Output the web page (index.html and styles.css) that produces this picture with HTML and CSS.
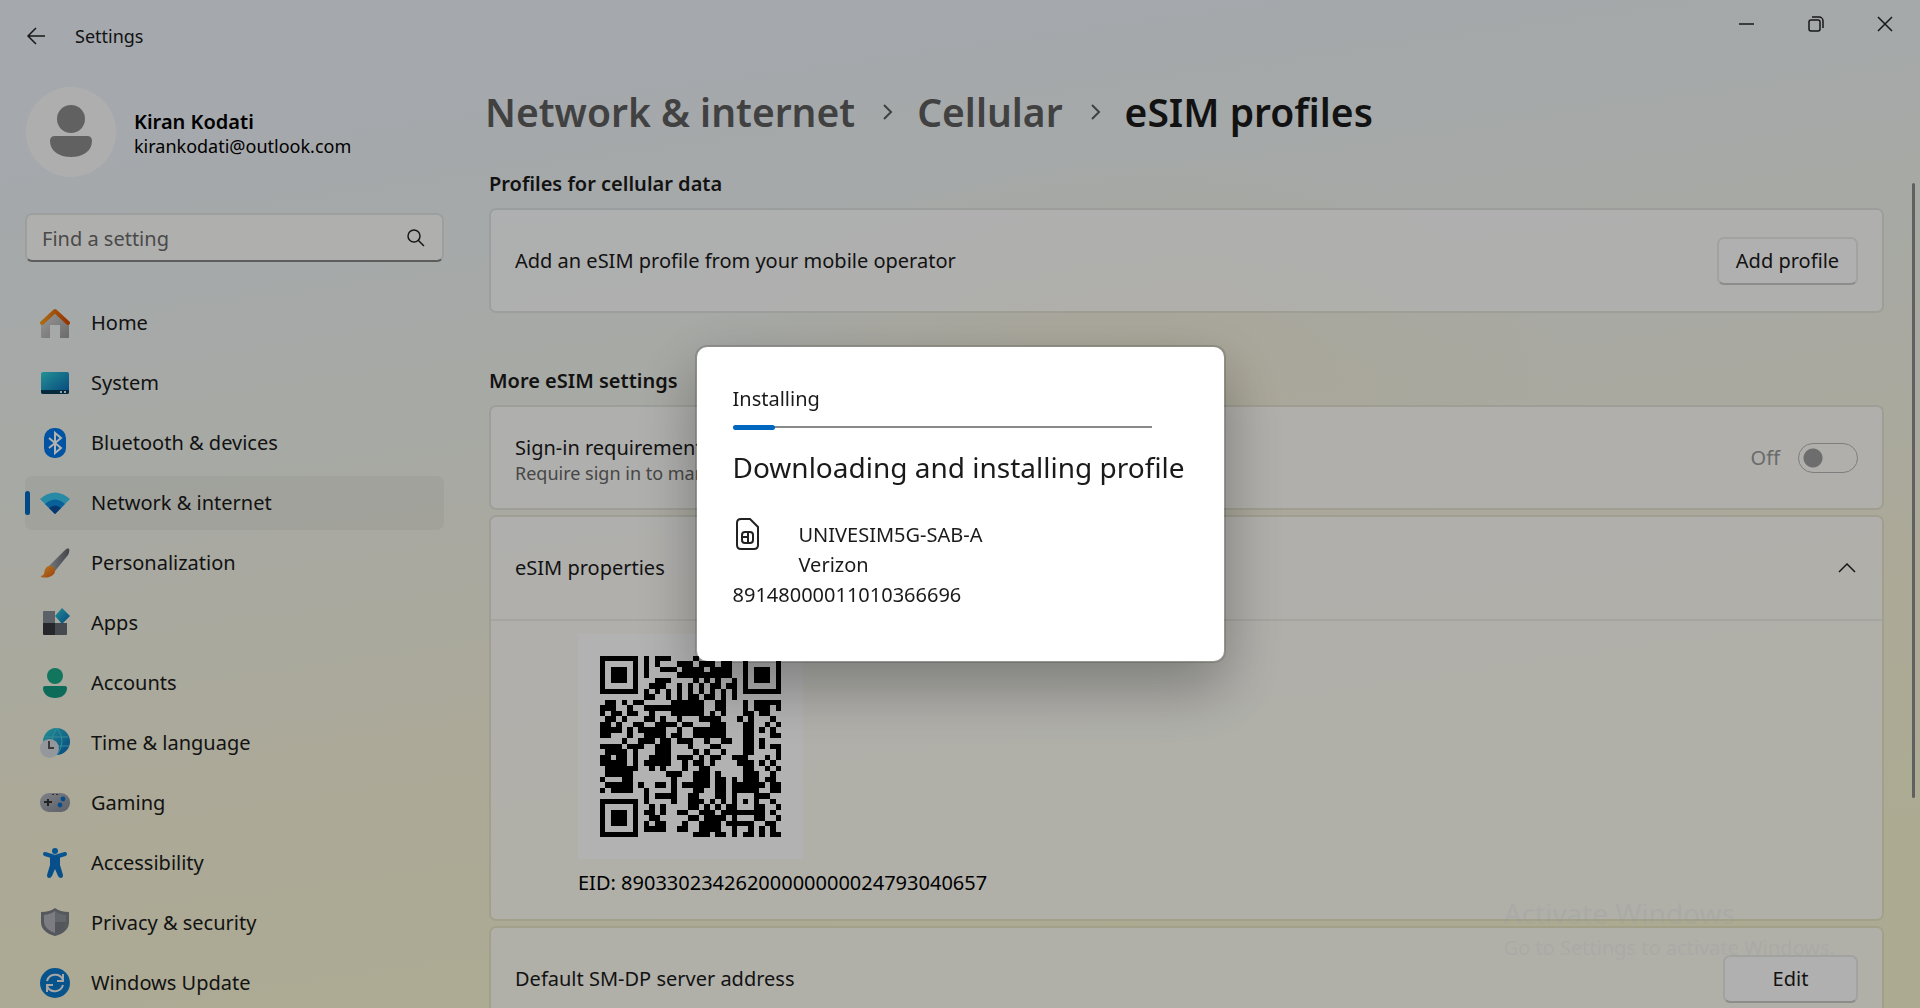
FILE: index.html
```html
<!doctype html>
<html lang="en">
<head>
  <meta charset="utf-8">
  <title>Settings</title>
  <link rel="stylesheet" href="styles.css">
</head>
<body>
<div class="window">
  <header class="titlebar">
    <button class="back" aria-label="Back"><svg width="20" height="18" viewBox="0 0 20 18"><path d="M19 9H2M10 1L2 9l8 8"/></svg></button>
    <span class="app-name">Settings</span>
    <div class="controls">
      <button aria-label="Minimize"><svg width="16" height="16" viewBox="0 0 16 16"><path d="M0 8h15"/></svg></button>
      <button aria-label="Restore"><svg width="16" height="16" viewBox="0 0 16 16"><rect x="1" y="4" width="11" height="11" rx="2"/><path d="M4 1h7a4 4 0 0 1 4 4v7"/></svg></button>
      <button aria-label="Close"><svg width="16" height="16" viewBox="0 0 16 16"><path d="M1 1l14 14M15 1L1 15"/></svg></button>
    </div>
  </header>

  <div class="body">
    <aside class="sidebar">
      <div class="user">
        <svg class="avatar" width="90" height="90" viewBox="0 0 90 90"><circle cx="45" cy="45" r="45" fill="#fafafa"/><circle cx="45" cy="32" r="14" fill="#8c8c8c"/><path d="M29 49h32q5 0 5 5c0 10-9 16-21 16s-21-6-21-16q0-5 5-5z" fill="#8c8c8c"/></svg>
        <div>
          <div class="user-name">Kiran Kodati</div>
          <div class="user-mail">kirankodati@outlook.com</div>
        </div>
      </div>
      <div class="search">
        <input type="text" placeholder="Find a setting" aria-label="Find a setting">
        <svg width="18" height="18" viewBox="0 0 18 18"><circle cx="7" cy="7" r="6"/><path d="M11 11l6 6"/></svg>
      </div>
      <nav class="menu">
        <a href="#"><svg viewBox="0 0 30 30"><defs><linearGradient id="wall" x1="0" y1="0" x2="1" y2="1"><stop offset="0" stop-color="#ddd"/><stop offset="1" stop-color="#999"/></linearGradient><linearGradient id="roof"><stop offset="0" stop-color="#f59a1c"/><stop offset="1" stop-color="#d84800"/></linearGradient></defs><path d="M1 14L15 2l14 12v15q0 1-1 1h-8V17H10v13H2q-1 0-1-1z" fill="url(#wall)"/><path d="M2 15L15 3l13 12" fill="none" stroke="url(#roof)" stroke-width="4" stroke-linecap="round" stroke-linejoin="round"/></svg>Home</a>
        <a href="#"><svg viewBox="0 0 30 30"><defs><linearGradient id="screen" x1="0" y1="0" x2="1" y2="1"><stop offset="0" stop-color="#34d0d5"/><stop offset="1" stop-color="#0864b5"/></linearGradient></defs><rect x="1" y="4" width="28" height="22" rx="2" fill="url(#screen)"/><path d="M1 22h28v2q0 2-2 2H3q-2 0-2-2z" fill="#083d58"/><path d="M20 23h2v2h-2zM24 23h2v2h-2z" fill="#d8e8f0"/></svg>System</a>
        <a href="#"><svg viewBox="0 0 30 30"><rect x="4" y="0" width="22" height="30" rx="10" fill="#0078e8"/><path d="M9 10l12 10-6 5V5l6 5L9 20" fill="none" stroke="#fff" stroke-width="2"/></svg>Bluetooth &amp; devices</a>
        <a href="#" class="active"><svg viewBox="0 0 30 30"><path d="M0 11q15-13 30 0L15 26z" fill="#3cc6ee"/><path d="M5 16q10-9 20 0L15 26z" fill="#0f8bdc"/><path d="M9 20q6-5 12 0l-6 6z" fill="#0b4f9d"/></svg>Network &amp; internet</a>
        <a href="#"><svg viewBox="0 0 30 30"><defs><linearGradient id="handle"><stop offset="0" stop-color="#a5aab2"/><stop offset="1" stop-color="#5f636a"/></linearGradient><linearGradient id="tip" x1="0" y1="0" x2="1" y2="1"><stop offset="0" stop-color="#ffb52e"/><stop offset="1" stop-color="#e65a18"/></linearGradient></defs><path d="M9 18L24 3q4-4 5-2t-1 6L15 23z" fill="url(#handle)"/><path d="M1 28c5-1 2-5 5-8 3-4 9-2 9 3 0 4-6 8-14 6z" fill="url(#tip)"/></svg>Personalization</a>
        <a href="#"><svg viewBox="0 0 30 30"><path d="M4 3h11v12H3V4q0-1 1-1z" fill="#858a94"/><path d="M3 15h12v12H4q-1 0-1-1z" fill="#35393e"/><path d="M15 15h12v11q0 1-1 1H15z" fill="#646973"/><path d="M22 0l8 8-8 8-7-8z" fill="url(#screen)"/></svg>Apps</a>
        <a href="#"><svg viewBox="0 0 30 30"><circle cx="15" cy="8" r="8" fill="#1aa987"/><path d="M5 18h20q2 0 2 2c0 6-5 10-12 10S3 26 3 20q0-2 2-2z" fill="#149a80"/></svg>Accounts</a>
        <a href="#"><svg viewBox="0 0 30 30"><circle cx="16.500" cy="13.500" r="13.500" fill="url(#screen)"/><path d="M5 9h23M5 18h24M17 0q-10 13 0 27M17 0q10 13 0 27" fill="none" stroke="#4ec9d8"/><circle cx="9.500" cy="20.500" r="9.500" fill="#d5d9df"/><path d="M9 13v7h5" fill="none" stroke="#555" stroke-width="2"/></svg>Time &amp; language</a>
        <a href="#"><svg viewBox="0 0 30 30"><defs><linearGradient id="pad" x1="0" y1="0" x2="1" y2="1"><stop offset="0" stop-color="#b5b9c2"/><stop offset="1" stop-color="#858993"/></linearGradient></defs><rect x="0" y="5" width="30" height="19" rx="9" fill="url(#pad)"/><path d="M8 11v7M4 14h8" stroke="#333" stroke-width="2"/><circle cx="23" cy="11" r="2.400" fill="#0870c8"/><circle cx="20" cy="17" r="2.400" fill="#0870c8"/><path d="M12 6h2v1h-2zM16 6h2v1h-2z" fill="#444"/></svg>Gaming</a>
        <a href="#"><svg viewBox="0 0 30 30"><circle cx="15" cy="3" r="3" fill="#0a7ad0"/><path d="M5 6l10 3 10-3" fill="none" stroke="#0a7ad0" stroke-width="4" stroke-linecap="round" stroke-linejoin="round"/><path d="M10 8h10v9l3 10q0 3-2 3t-3-2l-3-7-3 7q-1 2-3 2t-2-3l3-10z" fill="#0a72c8"/></svg>Accessibility</a>
        <a href="#"><svg viewBox="0 0 30 30"><path d="M15 0q5 4 14 4v10q0 10-14 14Q1 24 1 14V4q9 0 14-4z" fill="#7a7e85"/><path d="M15 3q4 3 11 4v7q0 7-11 11z" fill="#8f949b"/><path d="M15 3Q11 6 4 7v7q0 7 11 11z" fill="#b0b4ba"/><path d="M15 14h11q0 7-11 11z" fill="#777b82"/></svg>Privacy &amp; security</a>
        <a href="#"><svg viewBox="0 0 30 30"><circle cx="15" cy="15" r="15" fill="#0b78c9"/><path d="M7 13a8.500 8.500 0 0 1 16-1M23 6v7h-6M23 17a8.500 8.500 0 0 1-16 1M7 24v-7h6" fill="none" stroke="#eee" stroke-width="2"/></svg>Windows Update</a>
      </nav>
    </aside>

    <main class="content">
      <h1 class="crumbs">
        <a href="#">Network &amp; internet</a>
        <svg width="10" height="16" viewBox="0 0 10 16"><path d="M1 1l7 7-7 7"/></svg>
        <a href="#">Cellular</a>
        <svg width="10" height="16" viewBox="0 0 10 16"><path d="M1 1l7 7-7 7"/></svg>
        <span>eSIM profiles</span>
      </h1>

      <h2>Profiles for cellular data</h2>
      <section class="card row">
        <span>Add an eSIM profile from your mobile operator</span>
        <button class="btn">Add profile</button>
      </section>

      <h2 class="more">More eSIM settings</h2>
      <section class="card row">
        <div>
          <label for="signin">Sign-in requirement</label>
          <div class="note">Require sign in to manage</div>
        </div>
        <div class="switch">
          <span>Off</span>
          <input type="checkbox" id="signin" disabled>
        </div>
      </section>
      <section class="card">
        <div class="row">
          <span>eSIM properties</span>
          <button class="chevron" aria-label="Collapse"><svg width="18" height="10" viewBox="0 0 18 10"><path d="M1 9l8-8 8 8"/></svg></button>
        </div>
        <div class="props">
          <svg id="qr" class="qr" viewBox="-4 -4 41 41" shape-rendering="crispEdges"></svg>
          <div>EID: 89033023426200000000024793040657</div>
        </div>
      </section>
      <section class="card row">
        <span>Default SM-DP server address</span>
        <button class="btn edit">Edit</button>
      </section>
    </main>
  </div>
  <div class="scrollbar"></div>
</div>

<div class="overlay">
  <div class="dialog" role="dialog" aria-labelledby="dialog-title">
    <div>Installing</div>
    <div class="progress"><div class="bar"></div></div>
    <h3 id="dialog-title">Downloading and installing profile</h3>
    <div class="profile">
      <svg width="24" height="32" viewBox="0 0 24 32"><path d="M5 1h9l8 8v18q0 4-4 4H5q-4 0-4-4V5q0-4 4-4z"/><rect x="6" y="14" width="11" height="11" rx="3"/><path d="M6 19h6M12 14v11"/></svg>
      <div>UNIVESIM5G-SAB-A<br>Verizon</div>
    </div>
    <div>89148000011010366696</div>
  </div>
</div>

<div class="watermark">
  <div class="big">Activate Windows</div>
  <div>Go to Settings to activate Windows.</div>
</div>

<script>
  var rows=[
    '#######.#.###....#........#######',
    '#.....#.#.#...###.###.##..#.....#',
    '#.###.#.#..###.####.####..#.###.#',
    '#.###.#.#.....##########..#.###.#',
    '#.###.#...###....#.#.#..#.#.###.#',
    '#.....#..###..#.#.#.##.##.#.....#',
    '#######.#.#.#.#.#.#.#.#.#.#######',
    '........##..#.#.##.##.#.#........',
    '.##.#.##.....######..##...#.#####',
    '###..#..###########..##...#.###.#',
    '#.##.##..#...######.#.#...##.##..',
    '.##.#...##.#..#...####...#.#...#.',
    '##.#..##..####.##...###...##..#.#',
    '####.#.#####..#..######...##.#.#.',
    '##...#..####.##..######...##...##',
    '....#..###.##.###..#..##..##.#...',
    '####.###..###...#...##....##.#.##',
    '.####.#...###....#.#..#...##....#',
    '##.##.#..####.###.#.##..###...#.#',
    '#####.#.#####..#.##.#....###.#.#.',
    '.######..#.#...#..##......##..#.#',
    '.#####......###..###.#....###..#.',
    '#...##.......#...###.##.#.###.##.',
    '.#####.#..##.#.#####.##.######.##',
    '#.####..#....#...##..##.#####..##',
    '........#.####..##...##.#...###..',
    '#######.#....#..###.#.#.#.#.#..#.',
    '#.....#..#.#....##.#.#.##...##..#',
    '#.###.#.##.#..##..###.########.#.',
    '#.###.#..##.....##.####.#...##..#',
    '#.###.#.#.##...#..####.#####..##.',
    '#.....#.####..##..####..#..#.#.#.',
    '#######..........###.##.#.##.#.##'
  ];
  var d='';
  rows.forEach(function(row,y){
    for(var x=0;x<row.length;x++){
      if(row[x]==='#'){d+='M'+x+' '+y+'h1v1h-1z';}
    }
  });
  document.getElementById('qr').innerHTML='<path d="'+d+'"/>';
</script>
</body>
</html>
```
FILE: styles.css
```css
*{box-sizing:border-box;}
body{margin:0;height:100vh;overflow:hidden;font-family:"Noto Sans",sans-serif;font-size:20px;line-height:30px;color:#1a1a1a;}
button,input{font:inherit;color:inherit;}
button{border:0;padding:0;background:none;}
a{color:inherit;text-decoration:none;}
svg{display:block;flex:none;}

.window{height:100vh;overflow:hidden;display:flex;flex-direction:column;background:radial-gradient(ellipse at 60% 38%,rgba(246,238,212,.7),rgba(246,238,212,0) 26%),linear-gradient(172deg,#ecf1f8 8%,#edf2f2 24%,#f2f2e6 48%,#f6f2da 64%,#f7f5d2 85%);}
.titlebar{height:72px;flex:none;display:flex;align-items:center;padding-left:26px;}
.back svg,.controls svg,.search svg,.crumbs svg,.chevron svg,.profile svg{fill:none;stroke:#222;stroke-width:1.5;}
.app-name{margin-left:29px;font-size:18px;}
.controls{display:flex;margin-left:auto;padding-right:1px;align-self:flex-start;}
.controls button{width:69px;height:47px;display:flex;align-items:center;justify-content:center;}

.body{flex:1;min-height:0;display:flex;}
.sidebar{width:444px;flex:none;padding:15px 0 0 25px;}
.user{display:flex;align-items:center;gap:18px;padding-left:1px;line-height:25px;}
.user-name{padding-top:4px;font-weight:600;color:#000;}
.user-mail{font-size:18px;color:#000;}
.search{position:relative;margin-top:36px;}
.search input{display:block;width:100%;height:49px;padding:2px 15px 0;border:2px solid #dfe5e4;border-bottom-color:#868686;border-radius:7px;background:#fbfbfa;}
.search input::placeholder{color:#6a6a6a;opacity:1;}
.search svg{position:absolute;right:19px;top:16px;}
.menu{margin-top:34px;}
.menu a{position:relative;display:flex;align-items:center;gap:21px;height:54px;margin-bottom:6px;padding:0 15px;border-radius:7px;}
.menu svg{width:30px;height:30px;}
.active{background:rgba(0,0,0,.04);}
.active::before{content:"";position:absolute;left:0;top:15px;width:5px;height:24px;border-radius:3px;background:#0067c0;}

.content{flex:1;min-width:0;padding:10px 36px 0 45px;}
h1,h2,h3{margin:0;}
.crumbs{display:flex;align-items:center;margin-left:-4px;font-size:39px;line-height:60px;font-weight:600;white-space:nowrap;}
.crumbs a{color:#5d5d5d;}
.crumbs svg{margin:0 24px 0 28px;stroke:#5d5d5d;stroke-width:2;}
h2{margin-top:27px;font-size:20px;line-height:30px;font-weight:600;}
h2.more{margin-top:53px;}
h2+.card{margin-top:9px;}
.card{margin-bottom:5px;border:2px solid rgba(0,0,0,.06);border-radius:7px;background:rgba(255,255,255,.7);background-clip:padding-box;}
.row{display:flex;align-items:center;justify-content:space-between;height:102px;padding:0 24px;}
.card.row{height:105px;}
.btn{height:48px;min-width:141px;padding:0 16px;border:2px solid #e8e8e6;border-bottom-color:#c9c9c8;border-radius:7px;background:#fdfdfd;}
.edit{min-width:135px;}
.note{font-size:18px;line-height:20px;color:#666;}
.card label{display:block;}
.switch{display:flex;align-items:center;gap:18px;color:#999;}
.switch input{appearance:none;margin:0;width:60px;height:30px;border:1px solid #b5b5b5;border-radius:15px;background:radial-gradient(circle at 14px 14px,#9d9d9d 9px,transparent 10px);}
.chevron{padding:12px;margin-right:-10px;}
.props{padding:13px 87px 21px;border-top:2px solid rgba(0,0,0,.06);color:#000;}
.qr{width:225px;height:225px;margin-bottom:9px;background:#fff;}
.scrollbar{position:absolute;right:5px;top:183px;width:3px;height:61vh;border-radius:2px;background:#8a8a8a;}

.overlay{position:fixed;inset:0;display:flex;align-items:center;justify-content:center;background:rgba(0,0,0,.3);}
.dialog{width:531px;padding:37px 37px 51px 36px;border:2px solid rgba(0,0,0,.15);border-radius:12px;background:#fff;background-clip:padding-box;box-shadow:0 24px 60px rgba(0,0,0,.3);}
.progress{margin:11px 35px 18px 0;height:5px;background:linear-gradient(#8a8a8a,#8a8a8a) 0 1px/100% 2px no-repeat;}
.bar{width:42px;height:5px;border-radius:3px;background:#0067c0;}
h3{font-size:28px;line-height:38px;font-weight:400;white-space:nowrap;}
.profile{display:flex;gap:39px;margin-top:34px;padding-left:3px;}
.profile svg{margin-top:-2px;stroke-width:2;}
.watermark{position:fixed;right:85px;bottom:45px;color:rgba(150,155,160,.25);}
.watermark .big{font-size:28px;line-height:40px;}
```
